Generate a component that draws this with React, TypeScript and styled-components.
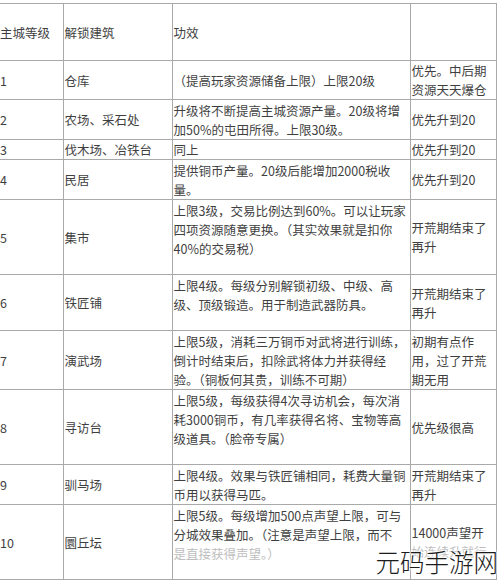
import React from 'react'
import styled, { createGlobalStyle } from 'styled-components'

const GlobalStyle = createGlobalStyle`
  html, body {
    margin: 0;
    padding: 0;
    background: #ffffff;
  }
  body {
    font-family: "Noto Sans CJK SC", "Noto Sans", sans-serif;
  }
`

const Page = styled.div`
  position: relative;
  width: 500px;
  height: 580px;
  overflow: hidden;
  padding-top: 3px;
  box-sizing: border-box;
`

const Table = styled.table`
  border-collapse: collapse;
  table-layout: fixed;
  width: 496px;
  font-size: 12.5px;
  line-height: 19px;
  color: #3f3f3f;
`

const Row = styled.tr<{ $h: number }>`
  height: ${(p) => p.$h}px;
`

const Cell = styled.td<{ $top?: boolean }>`
  border: 1px solid #a9a9a9;
  padding: ${(p) => (p.$top ? '1px 1px 0 1px' : '0 1px')};
  vertical-align: ${(p) => (p.$top ? 'top' : 'middle')};
  white-space: nowrap;
  overflow: hidden;
  &:first-child {
    border-left: none;
    padding-left: 0;
  }
`

const Faded = styled.span`
  color: #bdbdbd;
`

const Watermark = styled.div`
  position: absolute;
  right: 2px;
  bottom: 6px;
  font-family: "Noto Sans CJK SC", sans-serif;
  font-size: 24.5px;
  line-height: 1;
  font-weight: 300;
  color: #1c1c1c;
  text-shadow: 0 0 3px #fff, 0 0 3px #fff, 0 0 2px #fff;
  letter-spacing: 0;
`

type Item = {
  lv: string
  name: string
  effect: React.ReactNode
  tip: React.ReactNode
  h: number
  top?: boolean
}

const rows: Item[] = [
  { lv: '1', name: '仓库', effect: '（提高玩家资源储备上限）上限20级', tip: <>优先。中后期<br />资源天天爆仓</>, h: 37 },
  { lv: '2', name: '农场、采石处', effect: <>升级将不断提高主城资源产量。20级将增<br />加50%的屯田所得。上限30级。</>, tip: '优先升到20', h: 40 },
  { lv: '3', name: '伐木场、冶铁台', effect: '同上', tip: '优先升到20', h: 20 },
  { lv: '4', name: '民居', effect: <>提供铜币产量。20级后能增加2000税收<br />量。</>, tip: '优先升到20', h: 40 },
  { lv: '5', name: '集市', effect: <>上限3级，交易比例达到60%。可以让玩家<br />四项资源随意更换。（其实效果就是扣你<br />40%的交易税）</>, tip: <>开荒期结束了<br />再升</>, h: 75, top: true },
  { lv: '6', name: '铁匠铺', effect: <>上限4级。每级分别解锁初级、中级、高<br />级、顶级锻造。用于制造武器防具。</>, tip: <>开荒期结束了<br />再升</>, h: 56, top: true },
  { lv: '7', name: '演武场', effect: <>上限5级，消耗三万铜币对武将进行训练，<br />倒计时结束后，扣除武将体力并获得经<br />验。（铜板何其贵，训练不可期）</>, tip: <>初期有点作<br />用，过了开荒<br />期无用</>, h: 59 },
  { lv: '8', name: '寻访台', effect: <>上限5级，每级获得4次寻访机会，每次消<br />耗3000铜币，有几率获得名将、宝物等高<br />级道具。（脸帝专属）</>, tip: '优先级很高', h: 75, top: true },
  { lv: '9', name: '驯马场', effect: <>上限4级。效果与铁匠铺相同，耗费大量铜<br />币用以获得马匹。</>, tip: <>开荒期结束了<br />再升</>, h: 40 },
  { lv: '10', name: '圜丘坛', effect: <>上限5级。每级增加500点声望上限，可与<br />分城效果叠加。（注意是声望上限，而不<br /><Faded>是直接获得声望。）</Faded></>, tip: <>14000声望开<br /><Faded>始连续升就行</Faded></>, h: 75, top: true },
]

export default function App() {
  return (
    <Page>
      <GlobalStyle />
      <Table>
        <colgroup>
          <col style={{ width: 63 }} />
          <col style={{ width: 109 }} />
          <col style={{ width: 238 }} />
          <col style={{ width: 86 }} />
        </colgroup>
        <tbody>
          <Row $h={57}>
            <Cell>主城等级</Cell>
            <Cell>解锁建筑</Cell>
            <Cell>功效</Cell>
            <Cell></Cell>
          </Row>
          {rows.map((r) => (
            <Row $h={r.h} key={r.lv}>
              <Cell>{r.lv}</Cell>
              <Cell>{r.name}</Cell>
              <Cell $top={r.top}>{r.effect}</Cell>
              <Cell>{r.tip}</Cell>
            </Row>
          ))}
        </tbody>
      </Table>
      <Watermark>元码手游网</Watermark>
    </Page>
  )
}
